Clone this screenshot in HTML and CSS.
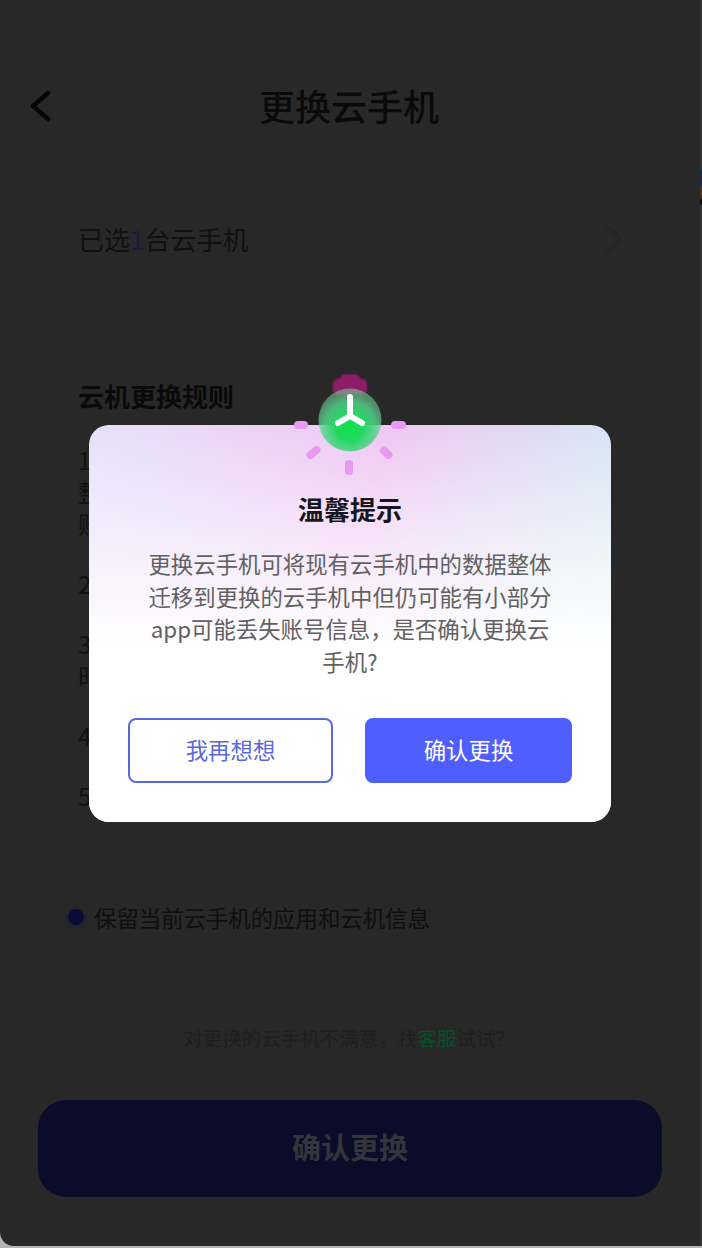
FILE: index.html
```html
<!DOCTYPE html>
<html lang="zh-CN">
<head>
  <meta charset="UTF-8">
  <meta name="viewport" content="width=device-width, initial-scale=1.0">
  <title>更换云手机</title>
  <link rel="stylesheet" href="styles.css">
</head>
<body>
  <div class="page">
    <div class="nav-bar">
      <svg class="back-icon" width="24" height="32" viewBox="0 0 24 32"><path d="M20 3 L5 16 L20 29" fill="none" stroke="#050505" stroke-width="4.5" stroke-linecap="round" stroke-linejoin="round"/></svg>
      <h1 class="nav-title">更换云手机</h1>
    </div>

    <div class="picked-row">
      <span>已选<em class="picked-count">1</em>台云手机</span>
      <svg class="picked-arrow" width="20" height="32" viewBox="0 0 20 32"><path d="M2 2 L17 16 L2 30" fill="none" stroke="#252525" stroke-width="2.5"/></svg>
    </div>

    <div class="rules">
      <h2 class="rules-title">云机更换规则</h2>
      <p class="rule-item">1<br>整<br>账</p>
      <p class="rule-item">2</p>
      <p class="rule-item">3<br>时</p>
      <p class="rule-item">4</p>
      <p class="rule-item">5</p>
    </div>

    <div class="keep-row">
      <span class="radio"></span>
      <span>保留当前云手机的应用和云机信息</span>
    </div>

    <div class="help-line">对更换的云手机不满意，找<span class="help-link">客服</span>试试?</div>

    <div class="submit-btn">确认更换</div>
  </div>
  <div class="edge-mark"></div>

  <!-- Dialog -->
  <div class="overlay">
    <div class="dialog">
      <div class="dialog-badge">
        <svg width="140" height="110" viewBox="0 0 140 110">
          <defs>
            <radialGradient id="ballFill" cx="50%" cy="62%" r="54%">
              <stop offset="0" stop-color="#0fe04e"/>
              <stop offset="0.4" stop-color="#22d862"/>
              <stop offset="0.75" stop-color="#50d488" stop-opacity="0.85"/>
              <stop offset="1" stop-color="#72dc9c" stop-opacity="0.55"/>
            </radialGradient>
            <filter id="soft"><feGaussianBlur stdDeviation="1.2"/></filter>
            <filter id="glow" x="-30%" y="-30%" width="160%" height="160%"><feGaussianBlur stdDeviation="0.6"/></filter>
          </defs>
          <g fill="#8f1a68" filter="url(#soft)">
            <rect x="53" y="5" width="34" height="16" rx="5"/>
            <rect x="60" y="0" width="20" height="10" rx="5"/>
          </g>
          <circle cx="70" cy="46" r="31.5" fill="#2a2a2a" fill-opacity="0.01"/>
          <circle cx="70" cy="46" r="31.5" fill="url(#ballFill)"/>
          <g stroke="#e79af0" stroke-linecap="round" fill="none" stroke-width="8">
            <path d="M18 51 H24"/>
            <path d="M115 51 H122"/>
            <path d="M30.5 81 L36.5 76"/>
            <path d="M104 76.5 L108.5 81"/>
            <path d="M69 90 V97"/>
          </g>
          <path d="M70 23 V42 M70 42 L58 49 M70 42 L82 49" fill="none" stroke="#fff" stroke-width="6" stroke-linecap="round" filter="url(#glow)"/>
        </svg>
      </div>
      <h3 class="dialog-title">温馨提示</h3>
      <p class="dialog-text">更换云手机可将现有云手机中的数据整体迁移到更换的云手机中但仍可能有小部分app可能丢失账号信息，是否确认更换云手机?</p>
      <div class="dialog-actions">
        <div class="dialog-btn btn-ghost">我再想想</div>
        <div class="dialog-btn btn-primary">确认更换</div>
      </div>
    </div>
  </div>
</body>
</html>
```

FILE: styles.css
```css
* {
  box-sizing: border-box;
}

html, body {
  margin: 0;
  padding: 0;
}

body {
  width: 702px;
  height: 1248px;
  overflow: hidden;
  position: relative;
  background: #b4b4b4;
  font-family: "Noto Sans CJK SC", "Noto Sans", sans-serif;
}

.page {
  height: 1246px;
  width: 702px;
  background: #282828;
  border-right: 2px solid #343434;
  border-bottom-left-radius: 14px;
  color: #0a0a0a;
}

.edge-mark {
  position: absolute;
  right: 0;
  top: 170px;
  width: 2px;
  height: 35px;
  background: linear-gradient(180deg, #1c2a44 0, #1c2a44 45%, #4a3020 50%, #4a3020 80%, #0c0c0c 85%);
}

.nav-bar {
  height: 213px;
  padding: 86px 2px 0 0;
  position: relative;
  text-align: center;
}

.back-icon {
  position: absolute;
  left: 28px;
  top: 90px;
}

.nav-title {
  margin: 0;
  font-size: 36px;
  line-height: 38px;
  font-weight: 500;
}

.picked-row {
  height: 52px;
  padding: 0 78px;
  display: flex;
  align-items: center;
  justify-content: space-between;
  font-size: 26px;
  line-height: 52px;
  color: #101010;
}

.picked-count {
  font-style: normal;
  color: #1a1a3c;
}

.picked-arrow {
  margin-right: -2px;
}

.rules {
  padding: 105px 0 0 78px;
  height: 632px;
}

.rules-title {
  margin: 0 0 22px;
  font-size: 26px;
  line-height: 52px;
  font-weight: 700;
  color: #0a0a0a;
}

.rule-item {
  margin: 0 0 28px;
  font-size: 24px;
  line-height: 32px;
  color: #111;
}

.keep-row {
  height: 40px;
  padding-left: 65px;
  display: flex;
  align-items: center;
  gap: 7px;
  font-size: 22.4px;
  color: #0f0f0f;
}

.radio {
  width: 22px;
  height: 22px;
  border-radius: 50%;
  background: #0a0c38;
  border: 3px solid #24242c;
}

.help-line {
  margin-top: 86px;
  height: 30px;
  line-height: 30px;
  font-size: 19.5px;
  text-align: center;
  color: #1f1f1f;
  padding-right: 12px;
}

.help-link {
  color: #07502a;
}

.submit-btn {
  margin: 47px 0 0 38px;
  width: 624px;
  height: 97px;
  border-radius: 28px;
  background: #0b0c2a;
  color: #34353b;
  font-size: 29px;
  font-weight: 700;
  line-height: 93px;
  text-align: center;
}

/* Dialog */
.overlay {
  position: absolute;
  left: 0;
  top: 0;
  width: 702px;
  height: 1248px;
}

.dialog {
  position: absolute;
  left: 89px;
  top: 425px;
  width: 522px;
  height: 397px;
  border-radius: 20px;
  padding: 64px 39px 0;
  text-align: center;
  background: linear-gradient(100deg, #e6e0fb 0%, #f0c6f2 50%, #d4e7f2 92%);
}

.dialog::after {
  content: "";
  position: absolute;
  left: 0;
  right: 0;
  top: 0;
  height: 100%;
  border-radius: 20px;
  background: linear-gradient(180deg, rgba(255, 255, 255, 0) 0, #fff 56%);
}

.dialog > * {
  position: relative;
  z-index: 1;
}

.dialog .dialog-badge {
  position: absolute;
  left: 191px;
  top: -51px;
  width: 140px;
  height: 110px;
  z-index: 2;
}

.dialog-title {
  margin: 0;
  font-size: 26px;
  line-height: 40px;
  font-weight: 700;
  color: #15161f;
}

.dialog-text {
  margin: 18px 20px 0;
  font-size: 22.4px;
  line-height: 32.5px;
  color: #616161;
}

.dialog-actions {
  margin-top: 41px;
  display: flex;
  justify-content: space-between;
}

.dialog-btn {
  height: 65px;
  border-radius: 8px;
  font-size: 22.4px;
  line-height: 58px;
}

.btn-ghost {
  width: 205px;
  border: 2px solid #5a68e0;
  color: #5a68e0;
  background: #fff;
}

.btn-primary {
  width: 207px;
  border: 2px solid #4f5fff;
  background: #4f5fff;
  color: #fff;
}
```
